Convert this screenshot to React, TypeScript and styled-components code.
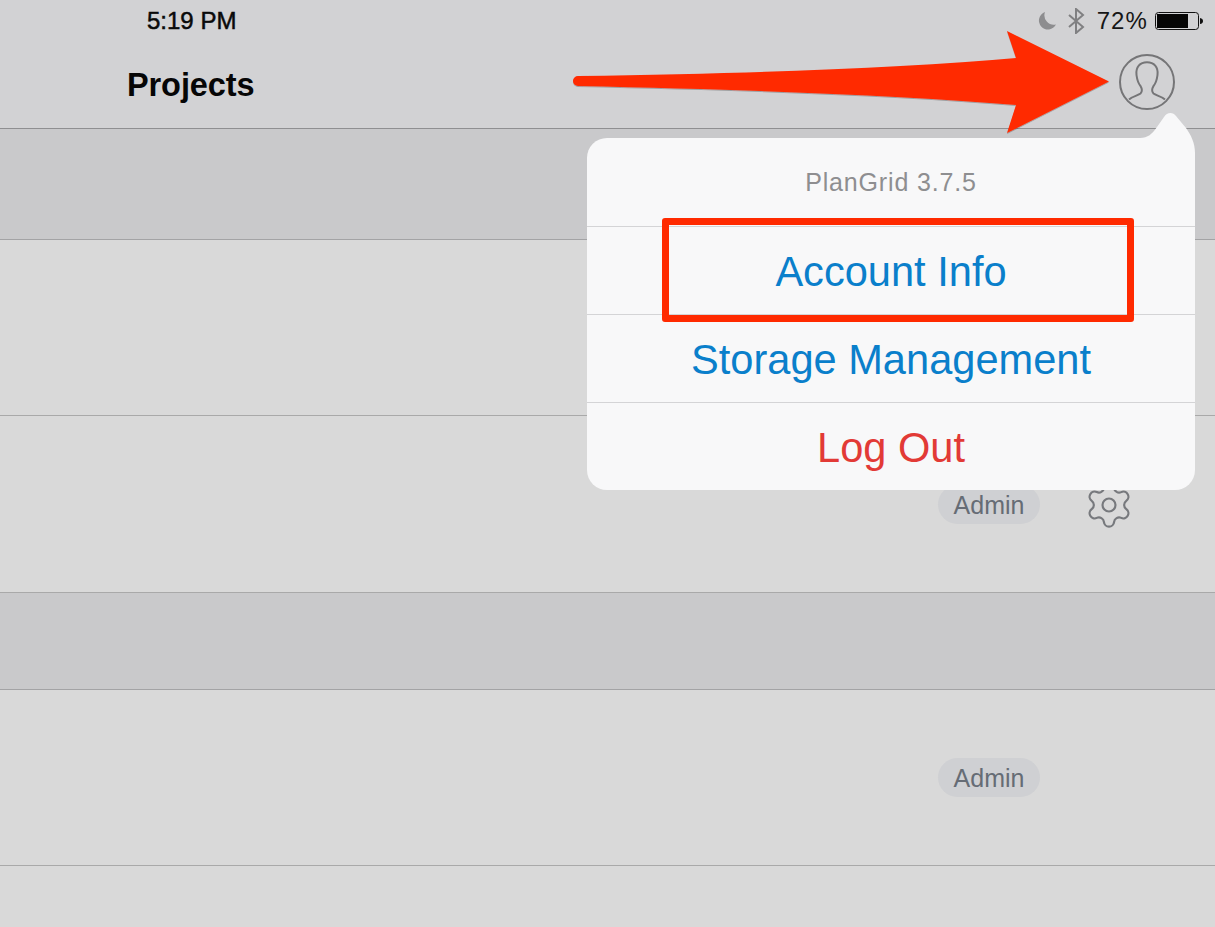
import React from "react";
import styled, { createGlobalStyle } from "styled-components";
import { Settings } from "lucide-react";

const Global = createGlobalStyle`
  html, body { margin: 0; padding: 0; background: #d9d9d9; }
  body { font-family: "Liberation Sans", Arial, sans-serif; }
`;

const Page = styled.div`
  position: relative;
  width: 1215px;
  height: 927px;
  overflow: hidden;
  background: #d9d9d9;
`;

const Header = styled.header`
  height: 128px;
  background: #d2d2d4;
  border-bottom: 1px solid #8f8f91;
  display: flex;
  flex-direction: column;
`;

const StatusBar = styled.div`
  height: 42px;
  display: flex;
  align-items: center;
  justify-content: space-between;
  padding: 0 11px 0 147px;
`;

const Clock = styled.span`
  font-size: 24px;
  font-weight: 400;
  color: #0a0a0a;
  -webkit-text-stroke: 0.5px #0a0a0a;
`;

const StatusIcons = styled.div`
  display: flex;
  align-items: center;
`;

const Percent = styled.span`
  font-size: 24px;
  letter-spacing: 1.1px;
  color: #161616;
  margin: 0 7px 0 12px;
`;

const NavBar = styled.div`
  flex: 1;
  display: flex;
  align-items: flex-start;
  justify-content: space-between;
  padding: 12px 40px 0 127px;
`;

const Title = styled.h1`
  margin: 12px 0 0;
  font-size: 32.5px;
  line-height: 38px;
  font-weight: 700;
  color: #060606;
  letter-spacing: -0.1px;
`;

const Section = styled.div<{ $h: number }>`
  height: ${(p) => p.$h}px;
  box-sizing: border-box;
  background: #c9c9cb;
  border-bottom: 1px solid #a3a3a5;
`;

const Row = styled.div<{ $h: number }>`
  height: ${(p) => p.$h}px;
  box-sizing: border-box;
  background: #d9d9d9;
  border-bottom: 1px solid #a9a9a9;
  display: flex;
  align-items: center;
  justify-content: flex-end;
  gap: 43px;
  padding-right: 80px;
`;

const Badge = styled.span`
  width: 102px;
  height: 39px;
  border-radius: 20px;
  background: #cfd0d3;
  color: #666c75;
  font-size: 25px;
  padding-top: 2px;
  box-sizing: border-box;
  display: flex;
  align-items: center;
  justify-content: center;
`;

const GearSlot = styled.div`
  width: 52px;
  height: 52px;
  margin-top: 2px;
  color: #77797d;
`;

const Popover = styled.div`
  position: absolute;
  left: 587px;
  top: 138px;
  width: 608px;
  height: 352px;
  background: #f8f8f9;
  border-radius: 20px;
  display: flex;
  flex-direction: column;
`;

const PopoverTip = styled.svg`
  position: absolute;
  left: 553px;
  top: -27px;
  width: 55px;
  height: 50px;
`;

const VersionRow = styled.div`
  height: 88px;
  display: flex;
  align-items: center;
  justify-content: center;
  font-size: 25px;
  letter-spacing: 0.85px;
  color: #8e8e90;
`;

const MenuItem = styled.div<{ $danger?: boolean }>`
  flex: 1;
  display: flex;
  align-items: center;
  justify-content: center;
  padding-top: 2px;
  border-top: 1px solid #d4d4d6;
  font-size: 41.6px;
  color: ${(p) => (p.$danger ? "#e23a36" : "#0a7fcb")};
`;

const Highlight = styled.div`
  position: absolute;
  left: 662px;
  top: 218px;
  width: 472px;
  height: 104px;
  box-sizing: border-box;
  border: 7px solid #ff2a00;
  border-radius: 3px;
`;

const ArrowSvg = styled.svg`
  position: absolute;
  left: 0;
  top: 0;
  width: 1215px;
  height: 927px;
  pointer-events: none;
`;

const Moon = () => (
  <svg width="20" height="18" viewBox="0 0 20 18" style={{ marginRight: 11 }}>
    <path d="M8 0 A9 9 0 1 0 19 12.5 A9.5 9.5 0 0 1 8 0 Z" fill="#8d8d8f" />
  </svg>
);

const BluetoothMark = () => (
  <svg width="17" height="26" viewBox="0 0 17 26" fill="none" stroke="#808082" strokeWidth="2">
    <path d="M1 7 L15 19 L8 25 V1 L15 7 L1 19" />
  </svg>
);

const Battery = () => (
  <svg width="49" height="18" viewBox="0 0 49 18">
    <rect x="0.5" y="0.5" width="43" height="17" rx="3" fill="none" stroke="#111" />
    <rect x="2" y="2" width="31" height="14" fill="#050505" />
    <path d="M45 6 Q48 6.500 48 9 Q48 11.500 45 12 Z" fill="#111" />
  </svg>
);

const UserCircle = () => (
  <svg width="56" height="56" viewBox="0 0 56 56" fill="none" stroke="#757577" strokeWidth="2">
    <circle cx="28" cy="28" r="27" />
    <path d="M10 45.500 C14 42 19 41.500 21.500 39.500 C23.500 37.500 23 34.500 21.500 32 C19 29 18 25 17.500 21 C16.500 13 21 8.300 28 8.300 C35 8.300 39.500 13 38.500 21 C38 25 37 29 34.500 32 C33 34.500 32.500 37.500 34.500 39.500 C37 41.500 42 42 46 45.500" />
  </svg>
);

export default function App() {
  return (
    <Page>
      <Global />
      <Header>
        <StatusBar>
          <Clock>5:19 PM</Clock>
          <StatusIcons>
            <Moon />
            <BluetoothMark />
            <Percent>72%</Percent>
            <Battery />
          </StatusIcons>
        </StatusBar>
        <NavBar>
          <Title>Projects</Title>
          <UserCircle />
        </NavBar>
      </Header>
      <Section $h={111} />
      <Row $h={176} />
      <Row $h={177}>
        <Badge>Admin</Badge>
        <GearSlot>
          <Settings size={52} strokeWidth={1} />
        </GearSlot>
      </Row>
      <Section $h={97} />
      <Row $h={176}>
        <Badge>Admin</Badge>
        <GearSlot />
      </Row>
      <Popover>
        <PopoverTip viewBox="0 0 55 50">
          <path
            d="M0 27 C8 27 12 23 17 16 L24 6 C27 1 33 1 36 5 L46 17 C51 24 55 32 55 42 L55 50 L0 50 Z"
            fill="#f8f8f9"
          />
        </PopoverTip>
        <VersionRow>PlanGrid 3.7.5</VersionRow>
        <MenuItem>Account Info</MenuItem>
        <MenuItem>Storage Management</MenuItem>
        <MenuItem $danger>Log Out</MenuItem>
      </Popover>
      <Highlight />
      <ArrowSvg viewBox="0 0 1215 927">
        <defs>
          <filter id="arrowShadow" x="-5%" y="-20%" width="110%" height="140%">
            <feDropShadow dx="0" dy="1" stdDeviation="0.7" floodColor="#000" floodOpacity="0.25" />
          </filter>
        </defs>
        <path
          d="M578 76 Q860 72 1016 58 L1007 31 L1109 81.500 L1007 133 L1016 105 Q860 92 578 86 A5 5 0 0 1 578 76 Z"
          fill="#ff2a00"
          filter="url(#arrowShadow)"
        />
      </ArrowSvg>
    </Page>
  );
}
